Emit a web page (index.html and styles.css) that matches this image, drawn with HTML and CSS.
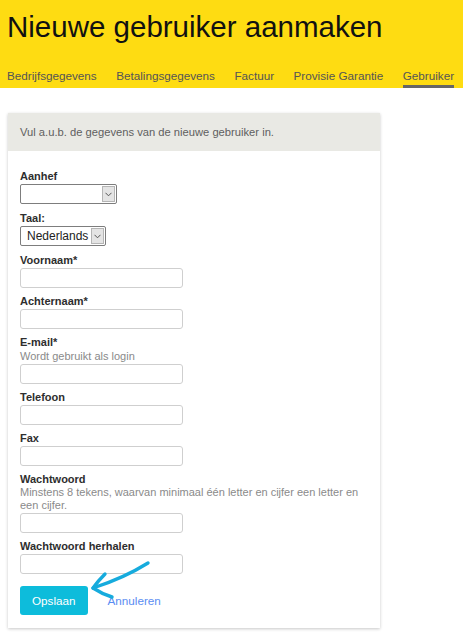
FILE: index.html
```
<!DOCTYPE html>
<html lang="nl">
<head>
<meta charset="utf-8">
<title>Nieuwe gebruiker aanmaken</title>
<link rel="stylesheet" href="styles.css">
</head>
<body>
<header class="top">
  <h1 class="title">Nieuwe gebruiker aanmaken</h1>
  <nav class="tabs">
    <a class="tab" href="#">Bedrijfsgegevens</a>
    <a class="tab" href="#">Betalingsgegevens</a>
    <a class="tab" href="#">Factuur</a>
    <a class="tab" href="#">Provisie Garantie</a>
    <a class="tab tab-active" href="#">Gebruiker</a>
  </nav>
</header>
<main class="main">
  <section class="card">
    <div class="card-head">Vul a.u.b. de gegevens van de nieuwe gebruiker in.</div>
    <form class="card-body">
      <div class="field field-select">
        <label class="label">Aanhef</label>
        <div class="select select-aanhef">
          <span class="select-value"></span>
          <span class="select-btn"><svg width="7" height="5" viewBox="0 0 7 5"><path d="M0.5 0.8 L3.5 3.8 L6.5 0.8" fill="none" stroke="#555" stroke-width="1"/></svg></span>
        </div>
      </div>
      <div class="field field-select">
        <label class="label">Taal:</label>
        <div class="select select-taal">
          <span class="select-value">Nederlands</span>
          <span class="select-btn"><svg width="7" height="5" viewBox="0 0 7 5"><path d="M0.5 0.8 L3.5 3.8 L6.5 0.8" fill="none" stroke="#555" stroke-width="1"/></svg></span>
        </div>
      </div>
      <div class="field">
        <label class="label">Voornaam*</label>
        <input class="input" type="text">
      </div>
      <div class="field">
        <label class="label">Achternaam*</label>
        <input class="input" type="text">
      </div>
      <div class="field">
        <label class="label">E-mail*</label>
        <div class="help">Wordt gebruikt als login</div>
        <input class="input" type="text">
      </div>
      <div class="field">
        <label class="label">Telefoon</label>
        <input class="input" type="text">
      </div>
      <div class="field">
        <label class="label">Fax</label>
        <input class="input" type="text">
      </div>
      <div class="field">
        <label class="label">Wachtwoord</label>
        <div class="help help-multi">Minstens 8 tekens, waarvan minimaal één letter en cijfer een letter en een cijfer.</div>
        <input class="input" type="password">
      </div>
      <div class="field">
        <label class="label">Wachtwoord herhalen</label>
        <input class="input" type="password">
      </div>
      <div class="actions">
        <button class="btn" type="button">Opslaan</button>
        <a class="link" href="#">Annuleren</a>
        <svg class="pointer" width="66" height="44" viewBox="0 0 66 44">
          <path d="M60 5 Q36 20 5 30" fill="none" stroke="#16abdd" stroke-width="3.4" stroke-linecap="round"/>
          <path d="M17 16 Q10 23 5 30 Q14 36 24 39" fill="none" stroke="#16abdd" stroke-width="3.4" stroke-linecap="round" stroke-linejoin="round"/>
        </svg>
      </div>
    </form>
  </section>
</main>
</body>
</html>
```
FILE: styles.css
```
* { box-sizing: border-box; }
html, body { margin: 0; padding: 0; background: #fff; }
body { font-family: "Liberation Sans", Arial, sans-serif; color: #333; }

.top {
  background: #fedc12;
  padding: 10px 7px 0;
}
.title {
  margin: 0;
  font-weight: normal;
  font-size: 29.5px;
  line-height: 34px;
  color: #111;
}
.tabs {
  margin-top: 25px;
  display: flex;
  gap: 19.5px;
}
.tab {
  font-size: 11.7px;
  line-height: 14px;
  color: #555;
  text-decoration: none;
  padding-bottom: 2px;
  border-bottom: 3px solid transparent;
}
.tab-active { border-bottom-color: #666; }

.main { padding: 25px 8px 20px; }
.card {
  width: 372px;
  background: #fff;
  box-shadow: 0 1px 3px rgba(0,0,0,0.22);
}
.card-head {
  height: 38px;
  background: #e9e9e4;
  padding: 0 12px;
  display: flex;
  align-items: center;
  font-size: 11.2px;
  color: #5f5f5f;
}
.card-body {
  margin: 0;
  padding: 18px 12px 13px;
}
.field {
  display: flex;
  flex-direction: column;
  align-items: flex-start;
  margin-bottom: 6px;
}
.field-select { margin-bottom: 7px; }
.label {
  font-size: 11px;
  font-weight: bold;
  line-height: 14px;
  color: #2e2e2e;
  margin-bottom: 1px;
}
.help {
  font-size: 11px;
  line-height: 14px;
  color: #8a8a8a;
  margin-top: -1px;
  margin-bottom: 1px;
}
.help-multi { line-height: 13px; }
.input {
  width: 163px;
  height: 20px;
  margin: 0;
  padding: 0 4px;
  border: 1px solid #cfcfcf;
  border-radius: 3px;
  background: #fff;
  font: 12px "Liberation Sans", Arial, sans-serif;
}
.select {
  display: flex;
  height: 20px;
  border: 1px solid #7d7d7d;
  border-radius: 2px;
  background: #fff;
}
.select-aanhef { width: 97px; }
.select-taal { width: 86px; }
.select-value {
  flex: 1;
  padding-left: 6px;
  font-size: 12px;
  line-height: 18px;
  color: #222;
}
.select-btn {
  width: 13px;
  margin: 1px 1px 1px 0;
  background: #e4e4e4;
  border: 1px solid #b5b5b5;
  display: flex;
  align-items: center;
  justify-content: center;
}
.actions {
  position: relative;
  display: flex;
  align-items: center;
  gap: 20px;
  margin-top: 12px;
}
.btn {
  height: 29px;
  padding: 0 12px;
  border: none;
  border-radius: 3px;
  background: #0dbcdb;
  color: #fff;
  font: 11.7px "Liberation Sans", Arial, sans-serif;
}
.link {
  font-size: 11.7px;
  color: #5a8df2;
  text-decoration: none;
}
.pointer {
  position: absolute;
  left: 68px;
  top: -28px;
}
```
